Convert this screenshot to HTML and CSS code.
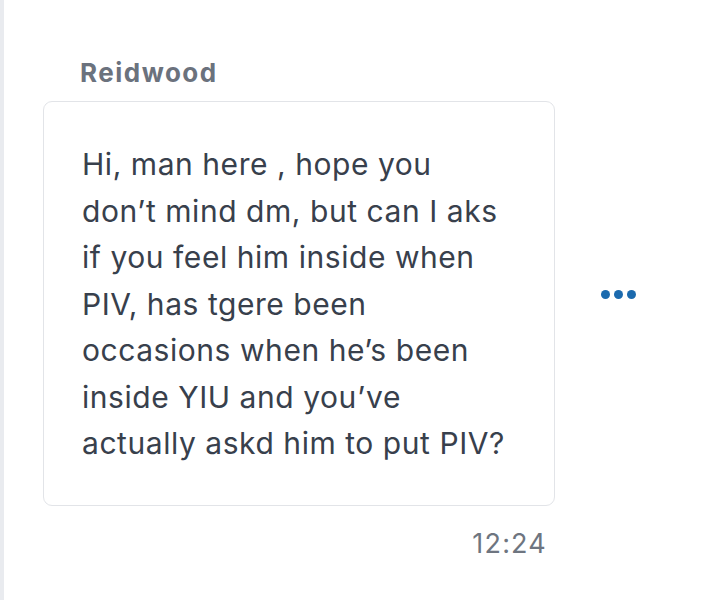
FILE: index.html
```html
<!DOCTYPE html>
<html>
<head>
<meta charset="utf-8">
<link rel="stylesheet" href="styles.css">
</head>
<body>
<div class="page">
  <div class="rail"></div>
  <div class="thread">
    <div class="sender">Reidwood</div>
    <div class="row">
      <div class="bubble">
        <p class="msg">Hi, man here , hope you<br>don’t mind dm, but can I aks<br>if you feel him inside when<br>PIV, has tgere been<br>occasions when he’s been<br>inside YIU and you’ve<br>actually askd him to put PIV?</p>
      </div>
      <div class="more" aria-label="More">
        <span class="dot"></span><span class="dot"></span><span class="dot"></span>
      </div>
    </div>
    <div class="time">12:24</div>
  </div>
</div>
</body>
</html>
```
FILE: styles.css
```css
html, body {
  margin: 0;
  padding: 0;
  background: #ffffff;
}
.page {
  display: flex;
  width: 717px;
  height: 600px;
  overflow: hidden;
  font-family: Inter, "Noto Sans", sans-serif;
}
.rail {
  width: 4px;
  flex: none;
  background: #e9ebef;
}
.thread {
  flex: 1;
  padding-left: 39px;
  padding-top: 57px;
}
.sender {
  padding-left: 37px;
  font-size: 26px;
  font-weight: 700;
  color: #6b727d;
  line-height: 32px;
  letter-spacing: 1.5px;
}
.row {
  display: flex;
  align-items: center;
  margin-top: 12px;
}
.bubble {
  width: 512px;
  box-sizing: border-box;
  border: 1.5px solid #e2e4e8;
  border-radius: 9px;
  padding: 39px 10px 38px 38px;
}
.msg {
  margin: 0;
  font-size: 30px;
  line-height: 46.5px;
  letter-spacing: 0.55px;
  color: #38404c;
  white-space: nowrap;
}
.more {
  display: flex;
  gap: 4px;
  margin-left: 46px;
  margin-bottom: 17px;
}
.dot {
  width: 9px;
  height: 9px;
  border-radius: 50%;
  background: #1b6aae;
}
.time {
  width: 504px;
  text-align: right;
  margin-top: 22px;
  font-size: 27px;
  color: #6e7580;
  line-height: 32px;
  letter-spacing: 1.2px;
}
```
